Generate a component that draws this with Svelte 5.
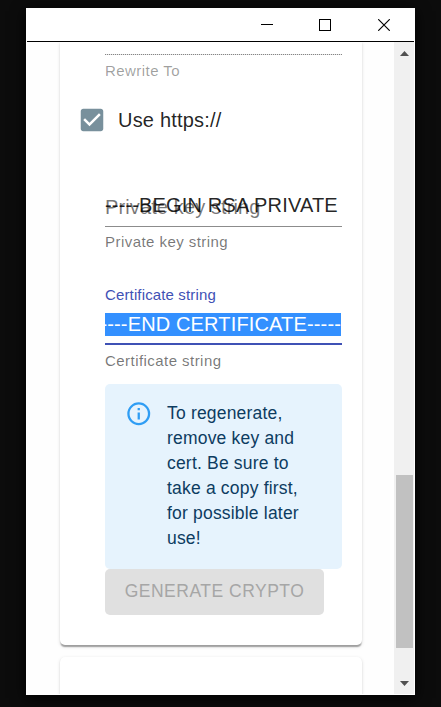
<script>
  const privateKey = '-----BEGIN RSA PRIVATE';
  const certificate = '-----END CERTIFICATE-----';
</script>

<div class="desktop">
  <div class="window">
    <header class="titlebar">
      <svg class="wctl" viewBox="0 0 12 12" shape-rendering="crispEdges"><path d="M0 5h12v1H0z" /></svg>
      <svg class="wctl" viewBox="0 0 12 12" shape-rendering="crispEdges"><path d="M.5 .5h11v11H.5z" fill="none" stroke="#000" /></svg>
      <svg class="wctl" viewBox="0 0 12 12"><path d="M.2 .2l11.6 11.6M11.8 .2L.2 11.8" fill="none" stroke="#000" stroke-width="1.15" /></svg>
    </header>
    <div class="viewport">
      <main>
        <section class="card settings">
          <div class="rewrite"></div>
          <div class="helper disabled">Rewrite To</div>
          <label class="check">
            <svg viewBox="0 0 24 24"><path d="M19 3H5c-1.11 0-2 .9-2 2v14c0 1.1.89 2 2 2h14c1.11 0 2-.9 2-2V5c0-1.1-.89-2-2-2zm-9 14l-5-5 1.41-1.41L10 14.17l7.59-7.59L19 8l-9 9z" fill="#78909c" /></svg>
            <span>Use https://</span>
          </label>
          <div class="field key">
            <span class="floating">Private key string</span>
            <div class="value">{privateKey}</div>
          </div>
          <div class="helper keyhelp">Private key string</div>
          <div class="label">Certificate string</div>
          <div class="field cert">
            <div class="selected"><span>{certificate}</span></div>
          </div>
          <div class="helper certhelp">Certificate string</div>
          <div class="alert">
            <svg viewBox="0 0 24 24"><path d="M11,9H13V7H11M12,20C7.59,20 4,16.41 4,12C4,7.59 7.59,4 12,4C16.41,4 20,7.59 20,12C20,16.41 16.41,20 12,20M12,2A10,10 0 0,0 2,12A10,10 0 0,0 12,22A10,10 0 0,0 22,12A10,10 0 0,0 12,2M11,17H13V11H11V17Z" fill="#2f9df4" /></svg>
            <p>To regenerate, remove key and cert. Be sure to take a copy first, for possible later use!</p>
          </div>
          <button disabled>GENERATE CRYPTO</button>
        </section>
        <section class="card next"></section>
      </main>
      <aside class="scrollbar">
        <svg class="arrow" viewBox="0 0 9 5"><path d="M4.5 0L9 5H0z" /></svg>
        <div class="thumb"></div>
        <svg class="arrow down" viewBox="0 0 9 5"><path d="M0 0h9L4.500 5z" /></svg>
      </aside>
    </div>
  </div>
</div>

<style>
  :global(body) { margin: 0; background: #0c0c0c; }
  .desktop {
    box-sizing: border-box;
    width: 441px;
    height: 707px;
    padding: 8px 26px 12px;
    background: #0c0c0c;
    overflow: hidden;
    font-family: "Liberation Sans", Arial, sans-serif;
    color: rgba(0, 0, 0, 0.87);
  }
  .window {
    box-sizing: border-box;
    width: 389px;
    height: 687px;
    padding: 0 1px 1px;
    background: #fff;
    box-shadow: 0 3px 14px #000;
  }
  .titlebar {
    box-sizing: border-box;
    height: 34px;
    padding: 11px 24px 0 0;
    border-bottom: 1px solid #000;
    display: flex;
    justify-content: flex-end;
    gap: 46px;
  }
  .wctl { width: 12px; height: 12px; }
  .wctl:last-child { margin-left: 1px; }
  .viewport { display: flex; height: 652px; overflow: hidden; }
  main { width: 367px; height: 652px; overflow: hidden; background: #fefefe; }
  .card {
    box-sizing: border-box;
    width: 302px;
    margin-left: 33px;
    background: #fff;
    box-shadow: 0 2.500px 1.250px -1.250px rgba(0, 0, 0, 0.2), 0 1.250px 1.250px rgba(0, 0, 0, 0.14), 0 1.250px 3.750px rgba(0, 0, 0, 0.12);
  }
  .settings {
    height: 603px;
    padding: 12px 20px 0 45px;
    border-radius: 0 0 5px 5px;
  }
  .next { height: 60px; margin-top: 12px; border-radius: 5px 5px 0 0; }
  .rewrite {
    height: 1px;
    background: repeating-linear-gradient(90deg, #858585 0 1px, #e4e4e4 1px 2px);
  }
  .helper {
    font-size: 15px;
    line-height: 20px;
    letter-spacing: 0.450px;
    white-space: nowrap;
    color: rgba(0, 0, 0, 0.54);
  }
  .disabled { margin-top: 6px; color: rgba(0, 0, 0, 0.38); }
  .check {
    display: flex;
    gap: 11px;
    height: 30px;
    margin: 24px 0 0 -28px;
    font-size: 20px;
    line-height: 30px;
    letter-spacing: 0.190px;
  }
  .check svg { width: 30px; height: 30px; }
  .field { font-size: 20px; white-space: nowrap; }
  .key {
    position: relative;
    box-sizing: border-box;
    height: 37px;
    margin-top: 55px;
    border-bottom: 1px solid #8c8c8c;
  }
  .value { line-height: 30px; letter-spacing: 0.160px; }
  .floating {
    position: absolute;
    left: 0;
    top: 2px;
    line-height: 30px;
    letter-spacing: 0.120px;
    color: rgba(0, 0, 0, 0.54);
  }
  .keyhelp { margin-top: 5px; }
  .label {
    margin-top: 33px;
    font-size: 15px;
    line-height: 20px;
    letter-spacing: 0.140px;
    color: #3f51b5;
  }
  .cert { box-sizing: border-box; height: 40px; padding-top: 8px; border-bottom: 2px solid #3f51b5; }
  .selected {
    display: flex;
    justify-content: flex-end;
    width: 236px;
    height: 23px;
    line-height: 23px;
    letter-spacing: 0.150px;
    overflow: hidden;
    background: #3390ff;
    color: #fff;
  }
  .certhelp { margin-top: 6px; }
  .alert {
    box-sizing: border-box;
    display: flex;
    height: 185px;
    margin-top: 13px;
    padding: 16px 20px 0;
    border-radius: 5px;
    background: #e6f3fd;
  }
  .alert svg { flex: none; width: 27.5px; height: 27.5px; margin-right: 14.5px; }
  p { margin: 1px 0 0; font-size: 17.5px; line-height: 25px; letter-spacing: 0.190px; color: #0d3c61; }
  button {
    display: block;
    width: 219px;
    height: 46px;
    padding: 0 0 2px;
    border: 0;
    border-radius: 5px;
    background: #e0e0e0;
    color: #a6a6a6;
    font: 17.5px/44px "Liberation Sans", Arial, sans-serif;
    letter-spacing: 0.5px;
    white-space: nowrap;
  }
  .scrollbar {
    box-sizing: border-box;
    width: 20px;
    height: 652px;
    padding: 9px 1px 0 2px;
    background: #f0f0f0;
    display: flex;
    flex-direction: column;
  }
  .arrow { flex: none; width: 9px; height: 5px; margin-left: 4px; fill: #505050; }
  .thumb { flex: none; height: 173px; margin-top: 419px; background: #c1c1c1; }
  .down { margin-top: 33px; }
</style>
